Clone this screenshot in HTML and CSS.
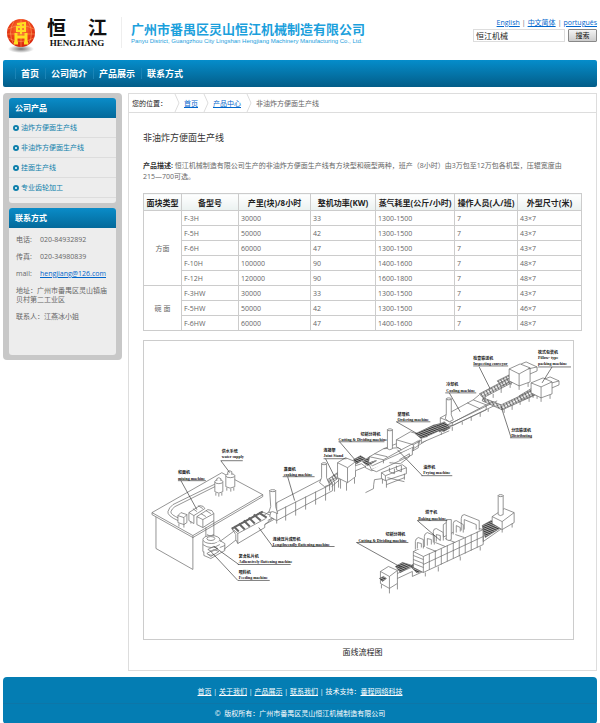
FILE: index.html
```html
<!DOCTYPE html>
<html lang="zh-CN">
<head>
<meta charset="utf-8">
<title>非油炸方便面生产线</title>
<link rel="stylesheet" href="styles.css">
</head>
<body>
<header class="header">
  <a class="logo" href="#">
    <svg class="logo-mark" viewBox="0 0 30 38" aria-hidden="true">
      <defs>
        <radialGradient id="ball" cx="50%" cy="35%" r="65%">
          <stop offset="0" stop-color="#ff8a3c"/><stop offset=".5" stop-color="#f0481c"/><stop offset="1" stop-color="#d4200a"/>
        </radialGradient>
        <radialGradient id="shade"><stop offset="0" stop-color="#777"/><stop offset="1" stop-color="#fff"/></radialGradient>
      </defs>
      <ellipse cx="15" cy="31" rx="13" ry="4" fill="url(#shade)"/>
      <circle cx="15" cy="15" r="14" fill="url(#ball)"/>
      <g fill="none" stroke="#ffb46a" stroke-width=".5"><path d="M2 11Q15 4 28 11M1 16H29M2 20Q15 27 28 20M15 1V29M8 3Q1 15 8 27M22 3Q29 15 22 27"/></g>
      <path d="M10 15V25M20 15V25M10 19H20M8 25H12M18 25H22" fill="none" stroke="#fd2" stroke-width="3"/>
      <path d="M11 6L19 5V9H11V13H19V8M15 5V16" fill="none" stroke="#fd2" stroke-width="2"/>
    </svg>
    <span class="logo-words"><span class="logo-cn"><span>恒</span><span>江</span></span><span class="logo-en">HENGJIANG</span></span>
  </a>
  <div class="company">
    <div class="company-cn">广州市番禺区灵山恒江机械制造有限公司</div>
    <div class="company-en">Panyu District, Guangzhou City Lingshan Hengjiang Machinery Manufacturing Co., Ltd.</div>
  </div>
  <div class="tools">
    <div class="langs"><a href="#">English</a><i>|</i><a href="#">中文简体</a><i>|</i><a href="#">português</a></div>
    <form class="search"><input type="text" value="恒江机械" aria-label="搜索内容"><button type="button">搜索</button></form>
  </div>
</header>
<nav class="nav"><a href="#">首页</a><a href="#">公司简介</a><a href="#">产品展示</a><a href="#">联系方式</a></nav>
<div class="columns">
  <aside class="side">
    <section class="box">
      <h2>公司产品</h2>
      <ul class="products">
        <li><a href="#">油炸方便面生产线</a></li>
        <li><a href="#">非油炸方便面生产线</a></li>
        <li><a href="#">挂面生产线</a></li>
        <li><a href="#">专业齿轮加工</a></li>
      </ul>
    </section>
    <section class="box">
      <h2>联系方式</h2>
      <div class="contact">
        <p><span>电话:</span>020-84932892</p>
        <p><span>传真:</span>020-34980839</p>
        <p><span>mail:</span><a href="#">hengjiang@126.com</a></p>
        <p class="address">地址：广州市番禺区灵山镇庙贝村第二工业区</p>
        <p>联系人：江燕冰小姐</p>
      </div>
    </section>
  </aside>
  <main class="main">
    <div class="crumbs">
      <b>您的位置：</b><svg viewBox="0 0 6 18"><path d="M1 0L5 9L1 18"/></svg><a href="#">首页</a><svg viewBox="0 0 6 18"><path d="M1 0L5 9L1 18"/></svg><a href="#">产品中心</a><svg viewBox="0 0 6 18"><path d="M1 0L5 9L1 18"/></svg><span>非油炸方便面生产线</span>
    </div>
    <article class="article">
      <h1>非油炸方便面生产线</h1>
      <p class="intro"><b>产品描述:</b> 恒江机械制造有限公司生产的非油炸方便面生产线有方块型和碗型两种，班产（8小时）由3万包至12万包各机型，压辊宽度由215—700可选。</p>
      <table class="specs">
        <colgroup><col class="c1"><col class="c2"><col class="c3"><col class="c4"><col class="c5"><col class="c6"><col class="c7"></colgroup>
        <thead><tr><th>面块类型</th><th>备型号</th><th>产里(块)/8小时</th><th>整机功率(KW)</th><th>蒸气耗里(公斤/小时)</th><th>操作人员(人/班)</th><th>外型尺寸(米)</th></tr></thead>
        <tbody>
          <tr><td class="kind" rowspan="5">方面</td><td>F-3H</td><td>30000</td><td>33</td><td>1300-1500</td><td>7</td><td>43×7</td></tr>
          <tr><td>F-5H</td><td>50000</td><td>42</td><td>1300-1500</td><td>7</td><td>43×7</td></tr>
          <tr><td>F-6H</td><td>60000</td><td>47</td><td>1300-1500</td><td>7</td><td>43×7</td></tr>
          <tr><td>F-10H</td><td>100000</td><td>90</td><td>1400-1600</td><td>7</td><td>48×7</td></tr>
          <tr><td>F-12H</td><td>120000</td><td>90</td><td>1600-1800</td><td>7</td><td>48×7</td></tr>
          <tr><td class="kind" rowspan="3">碗 面</td><td>F-3HW</td><td>30000</td><td>33</td><td>1300-1500</td><td>7</td><td>43×7</td></tr>
          <tr><td>F-5HW</td><td>50000</td><td>42</td><td>1300-1500</td><td>7</td><td>46×7</td></tr>
          <tr><td>F-6HW</td><td>60000</td><td>47</td><td>1400-1600</td><td>7</td><td>48×7</td></tr>
        </tbody>
      </table>
      <figure class="flow">
        <svg viewBox="144 341 430 299" role="img" aria-label="面线流程图">
          <defs>
            <pattern id="rollers" width="2" height="2" patternUnits="userSpaceOnUse" patternTransform="rotate(24)"><rect width="2" height="2" fill="#aaa"/><path d="M0 .5H2" stroke="#333" stroke-width="1"/></pattern>
            <pattern id="belt" width="3" height="3" patternUnits="userSpaceOnUse" patternTransform="rotate(-28)"><rect width="3" height="3" fill="#fff"/><path d="M.5 0V3M0 1H3" stroke="#444" stroke-width=".7"/></pattern>
          </defs>
          <g class="line">
            <!-- work table -->
            <path d="M156 517V549L193 570V537"/>
            <path d="M152 513L222 473L263 495L193 536ZM152 513V515L193 538L263 497V495M193 536V538"/>
            <path d="M178 521Q167 516 168 512T173 505L216 484M180 519Q170 515 171 512T175 507L217 486"/>
            <!-- water tanks -->
            <path d="M215 482V492Q219 495 223 492V482"/><ellipse cx="219" cy="482" rx="4" ry="2"/><path d="M217 481V479Q219 477 221 479V481M216 493V496M219 494V497M222 493V496"/>
            <path d="M226 476V487Q230 490 235 487V476"/><ellipse cx="230.500" cy="476" rx="4.500" ry="2"/><path d="M228 475V472Q230 470 232 472V475M227 488V491M231 489V492M234 488V491"/>
            <!-- mixing machines -->
            <path d="M178 516L181 513L187 515V523L184 525L178 523ZM178 516L184 518L187 515M184 518V525M179 524V527M184 525V528"/>
            <path d="M189 513L200 506Q204 506 205 509L194 516ZM189 513V521L194 524V516M197 517L208 510Q213 510 214 514L203 520ZM197 517V525L203 528L214 521V514M203 520V528M193 509L197 512M198 506L203 509M201 514L206 517M206 511L211 514M191 522V524"/>
            <!-- feeding and kneading -->
            <path d="M206 528V538M214 521V540M207 535Q210 538 214 535"/>
            <path d="M203 541V552Q211 559 220 553V541"/><ellipse cx="211.500" cy="540" rx="8.500" ry="4"/><ellipse cx="211" cy="539" rx="4" ry="2"/>
            <path d="M203 545Q211 551 220 545M204 552L204 556L211 559L225 551V544L220 541M208 550L214 547L218 549L212 552ZM207 554L214 550L219 552L211 557ZM220 548L225 546"/>
            <path d="M220 542L235 531M224 550L238 539"/>
            <!-- lengthwise flattening -->
            <path d="M232 529L262 512L274 517V520L265 525V528L238 544L236 540V535ZM232 529L238 534L266 519M238 534V544M265 525L274 518"/>
            <path d="M234 527L239 532M239 524L245 530M244 521L250 527M249 518L255 524M254 515L261 521M259 513L267 518M232 529L263 512" stroke-width="2"/>
            <path d="M264 516L275 508M268 521L278 515"/>
            <!-- cooking tunnel -->
            <path d="M277 503L323 479L333 484V491L277 521L270 517L272 509ZM277 503V521M277 512L333 484M277 521V524M286 516V521M296 511V516M306 506V510M316 501V505M326 495V501M286 507V516M296 502V511M306 497V506M316 492V501M326 487V495"/>
            <path d="M270 491H276V507L278 514L273 512L269 513L271 507Z"/><ellipse cx="273" cy="491" rx="3" ry="1"/>
            <path d="M322 464H327V478L330 485L325 487L320 483L322 478Z"/><ellipse cx="324.500" cy="464" rx="2.500" ry="1"/>
            <!-- joint stand -->
            <path class="belt" d="M328 480L342 470L346 473L331 484Z"/><path d="M330 484V491M335 482V492M341 476V489M332 487L340 480"/>
            <path d="M338 463L346 458L356 462V477L348 483L338 478ZM338 463L348 468L356 462M348 468V483M339 479V488M347 483V491M355 478V484"/>
            <!-- cutting rollers -->
            <path class="dark" d="M354 460L361 456L366 459L357 464ZM363 462L370 457L377 461L368 466Z"/><path d="M356 466L362 464L366 467L356 471M366 466V468L372 471L377 469"/>
            <!-- fryer -->
            <path d="M370 457L384 449L399 448L402 450L419 441V448L401 458L372 470L369 463ZM370 457L384 460L402 450M384 460V466M384 449L397 444M369 463L373 466L415 447M375 454L388 457M397 440L411 432L428 437L414 445ZM397 440V447L402 450M414 445V451M428 437V440L414 449"/>
            <path d="M372 470L377 472L413 455V448M400 460L410 454V457L401 464L390 463"/>
            <path d="M388 430H393V449Q390 451 388 449Z"/><ellipse cx="390.500" cy="430" rx="2.500" ry="1"/>
            <path d="M382 473L403 465L407 468V474L386 481L382 479ZM382 473L386 476L407 468M386 476V481M383 479V484M387 481V488M405 474V480M388 478L405 482M387 485L405 478M390 468V472L395 474V469M397 466V470L402 472V466"/>
            <path fill="none" d="M382 479L375 480Q374 485 374 489L366 493"/>
            <!-- ordering conveyor -->
            <path class="dark" d="M416 434L435 425L442 430L422 439ZM436 425L444 423L451 428L444 432Z"/><path d="M422 439V443L450 431M420 440V444"/>
            <!-- cooling machine -->
            <path d="M441 418L474 400L487 405V410L453 426L441 423ZM441 418L453 423L487 405M453 423V426M468 403L481 409M440 429L498 401M440 432L499 404M442 432V435M453 427V431M463 422V425M472 417V421M481 413V417M489 409V412"/>
            <path d="M447 399H452V415L454 420L450 422L446 419L447 414Z"/><ellipse cx="449.500" cy="399" rx="2.500" ry="1"/>
            <path class="dark" d="M440 425L445 422L450 427L440 432Z"/>
            <!-- branching conveyors and packing machines -->
            <path class="belt" d="M480 394L514 376L518 380L484 398ZM498 381L514 373L519 377L503 386ZM484 398L502 405L540 387L543 392L503 410L483 401ZM520 396L535 387L541 392L524 400Z"/>
            <path d="M474 400L480 395M487 405L495 402M486 397V401M494 394V398M502 388V393M511 384V388M518 381V385M505 409V413M513 405V410M521 401V405M530 398V402M538 394V399"/>
            <path d="M510 369L521 364L531 368V382L520 386L510 381ZM510 369L520 374L531 368M520 374V386M522 364L527 362L538 367V371L531 374M529 369L538 367M512 382V385M520 386V390M529 383V387"/>
            <path d="M532 383L544 378L553 382V394L542 398L532 393ZM532 383L542 387L553 382M542 387V398M546 379L551 377L560 381V385L553 388M553 383L560 381M534 394V398M542 398V402M551 395V399"/>
            <!-- drying line -->
            <path d="M381 572L389 567L398 571V584L390 589L381 584ZM381 572L390 577L398 571M390 577V589M382 585V589M390 589V594M398 584V590"/><path class="dark" d="M380 579L384 577L387 579L383 582Z"/>
            <path class="dark" d="M396 567L403 563L413 566L401 573ZM411 567L417 562L424 566V571L418 574Z"/><path d="M398 574L412 568M398 579L413 572V577L424 572"/>
            <path d="M414 552L468 526L484 530V545L424 573L414 568ZM414 552L424 557L484 530M424 557V573M424 565L484 537M430 554V570M436 551V567M442 549V565M448 546V562M454 543V559M460 541V557M466 538V554M472 535V551M478 532V548M414 556L424 560M414 560L424 564M414 564L424 568M426 573V577M439 567V572M461 557V561M481 547V551"/>
            <path d="M416 550V542Q416 539 419 538L424 540V549M418 549V543L422 544V548M425 547V537Q425 534 428 533L435 536V545M428 546V539L432 540V545M434 543V532Q434 529 437 529L444 533V541M437 542V535L441 536V541M454 535V524Q454 521 457 521L464 525V533M457 533V526L461 528V532M462 531V519Q462 515 465 515L480 521V531M465 530V520L477 525V530M427 548L437 552M436 543L446 547M446 539L456 543M456 535L465 538"/>
            <path d="M447 520H452V540Q450 542 447 540ZM444 537V525L447 523"/>
            <path class="dark" d="M483 526L492 521L502 528L486 538Z"/><path d="M484 542L504 528"/>
            <path d="M493 517L505 509L515 513V523L503 530L493 524ZM493 517L503 522L515 513M503 522V530M503 530V533M513 524V528M484 526V542"/>
            <path d="M499 496H504V515Q501 517 499 515Z"/><ellipse cx="501.500" cy="496" rx="2.500" ry="1"/>
          </g>
          <g class="leader">
            <path d="M221 461H243M221 461L230 473"/><path d="M178 481H206M181 481L197 510"/>
            <path d="M283 477H315M288 477L295 501"/><path d="M324 459H347M326 459L335 477"/>
            <path d="M339 442H385M340 442L358 463"/><path d="M397 422H431M397 422L418 434"/>
            <path d="M446 393H477M450 393L461 412"/><path d="M474 366H509M480 367L491 389"/>
            <path d="M539 367H572M553 367L543 383"/><path d="M511 438H533M512 438L502 407"/>
            <path d="M422 476H453M423 476L398 450"/><path d="M272 547H335M273 547L259 528"/>
            <path d="M238 565H291M239 565L214 547"/><path d="M238 581H270M238 581L211 552"/>
            <path d="M418 521H448M418 521L441 541"/><path d="M357 543H409M357 543L402 568"/>
          </g>
          <g class="label">
            <text x="222" y="453">供水系统</text><text x="222" y="458">water supply</text>
            <text x="178" y="474">和面机</text><text x="178" y="480">mixing machine</text>
            <text x="284" y="471">蒸面机</text><text x="284" y="476">cooking machine</text>
            <text x="324" y="452">连接架</text><text x="324" y="457">Joint Stand</text>
            <text x="361" y="436">切割分排机</text><text x="339" y="441">Cutting &amp; Dividing machine</text>
            <text x="398" y="416">整理机</text><text x="398" y="421">Ordering machine</text>
            <text x="447" y="386">冷却机</text><text x="447" y="392">Cooling machine</text>
            <text x="474" y="360">检查输送机</text><text x="474" y="365">Inspecting conveyor</text>
            <text x="539" y="354">枕式包装机</text><text x="539" y="359">Pillow- type</text><text x="539" y="365">packing machine</text>
            <text x="512" y="432">分流输送机</text><text x="512" y="437">Distributing</text>
            <text x="424" y="469">油炸机</text><text x="424" y="474">Frying machine</text>
            <text x="273" y="541">连续压片成形机</text><text x="273" y="546">Lengthwendly flattening machine</text>
            <text x="239" y="559">复合轧片机</text><text x="239" y="564">Adhensively flattening machine</text>
            <text x="239" y="575">喂料机</text><text x="239" y="580">Feeding machine</text>
            <text x="426" y="514">烘干机</text><text x="419" y="520">Baking machine</text>
            <text x="386" y="536">切割分排机</text><text x="359" y="542">Cutting &amp; Dividing machine</text>
          </g>
        </svg>
        <figcaption>面线流程图</figcaption>
      </figure>
    </article>
  </main>
</div>
<footer class="footer">
  <div class="foot-links"><a href="#">首页</a> | <a href="#">关于我们</a> | <a href="#">产品展示</a> | <a href="#">联系我们</a> | 技术支持：<a href="#">番程网络科技</a></div>
  <div class="copyright">©&nbsp; 版权所有：广州市番禺区灵山恒江机械制造有限公司</div>
</footer>
</body>
</html>
```
FILE: styles.css
```css
*, *::before { box-sizing: border-box; }
body { margin: 0; padding: 0 3px; background: #fff; color: #666; font: 7px/9px "Open Sans", "Noto Sans CJK SC", sans-serif; }
h1, h2, p, ul, figure { margin: 0; padding: 0; }
a { color: #06c; }
.header { display: flex; height: 60px; }
.logo { display: flex; align-items: flex-start; width: 118px; padding: 18px 0 0 3px; color: #111; text-decoration: none; }
.logo-mark { width: 30px; height: 38px; flex: none; }
.logo-words { display: flex; flex-direction: column; align-items: center; margin-left: 8px; width: 66px; }
.logo-cn { display: flex; justify-content: space-between; width: 60px; font-size: 19px; line-height: 20px; font-weight: 700; }
.logo-en { font: bold 9px/10px "Liberation Serif", serif; }
.company { flex: 1; margin: 17px 0 12px; padding: 5px 0 0 9px; border-left: 1px solid #eee; color: #1ba0dc; white-space: nowrap; }
.company-cn { font-size: 13px; line-height: 15px; font-weight: 700; }
.company-en { font: 6px/8px "Liberation Sans", sans-serif; }
.tools { display: flex; flex-direction: column; align-items: flex-end; padding-top: 18px; }
.langs { line-height: 9px; }
.langs i { margin: 0 2px; font-style: normal; }
.search { display: flex; gap: 3px; margin-top: 2px; }
.search input { width: 92px; height: 13px; padding: 0 2px; border: 1px solid #ddd; color: #222; font: inherit; font-size: 8px; }
.search button { width: 29px; height: 13px; padding: 0; border: 1px solid #888; border-radius: 1px; background: linear-gradient(#f4f4f4, #ccc); color: #111; font: inherit; }
.nav { display: flex; align-items: center; height: 27px; padding-left: 12px; border-radius: 2px; background: linear-gradient(#058dcb, #035d88); }
.nav a { padding: 0 6px 0 5px; border-left: 1px solid #1a84b6; color: #fff; font-size: 9px; line-height: 11px; font-weight: 700; text-decoration: none; }
.columns { display: flex; align-items: flex-start; gap: 6px; margin-top: 6px; }
.side { display: flex; flex-direction: column; gap: 5px; width: 119px; flex: none; padding: 5px 6px; border-radius: 4px; background: #c8c8c8; }
.box { border-radius: 3px; background: #ededed; overflow: hidden; }
.box h2 { padding: 0 6px; background: linear-gradient(#0a8cc8, #03699a); color: #fff; font-size: 8px; line-height: 20px; }
.products { padding-bottom: 5px; list-style: none; }
.products li { display: flex; align-items: center; height: 20px; padding-left: 4px; border-bottom: 1px solid #ddd; }
.products li::before { content: ""; width: 6px; height: 6px; margin-right: 2px; border: 2px solid #0d7fab; border-radius: 50%; background: #fff; }
.products a { color: #0d7fab; text-decoration: none; }
.contact { display: flex; flex-direction: column; gap: 8px; padding: 7px 6px 34px 7px; }
.contact span { display: inline-block; width: 24px; }
.main { flex: 1; min-width: 0; border: 1px solid #ddd; }
.crumbs { display: flex; align-items: center; height: 19px; padding-left: 3px; border-bottom: 1px solid #ddd; }
.crumbs b { padding-right: 2px; color: #222; font-weight: 400; }
.crumbs svg { width: 6px; height: 18px; margin: 0 4px 0 5px; fill: none; stroke: #ddd; }
.article { padding: 19px 14px 13px; }
.article h1 { color: #333; font-size: 9px; line-height: 12px; font-weight: 400; }
.intro { margin: 16px 0 11px; padding-right: 12px; line-height: 11px; }
.intro b { color: #333; }
.specs { width: 100%; table-layout: fixed; border-collapse: collapse; }
.specs th, .specs td { height: 15px; padding: 0 2px; border: 1px solid #ccc; text-align: left; }
.specs th { height: 17px; padding: 0; background: linear-gradient(#fff, #eaf1f0); color: #222; font-size: 8px; text-align: center; white-space: nowrap; }
.specs .kind { text-align: center; }
.c1 { width: 38px; } .c2 { width: 57px; } .c3 { width: 72px; } .c4 { width: 65px; } .c5 { width: 79px; } .c6 { width: 63px; }
.flow { margin: 9px 8px 0 0; }
.flow svg { display: block; width: 100%; border: 1px solid #ccc; }
.flow figcaption { margin-top: 7px; padding-left: 8px; color: #222; font-size: 8px; line-height: 10px; text-align: center; }
.line { fill: #fff; stroke: #666; stroke-width: .7; }
.line .dark { fill: url(#rollers); }
.line .belt { fill: url(#belt); }
.line path[stroke-width] { fill: none; }
.leader { fill: none; stroke: #222; stroke-width: .6; }
.label { fill: #111; font: bold 4px "Liberation Serif", "Noto Sans CJK SC", serif; }
.footer { margin-top: 6px; border-radius: 4px; background: #047db3; color: #fff; text-align: center; }
.footer a { color: #fff; }
.foot-links { padding: 10px 0 7px; border-bottom: 1px solid #0d76a8; }
.copyright { padding: 5px 0 6px; }
```
